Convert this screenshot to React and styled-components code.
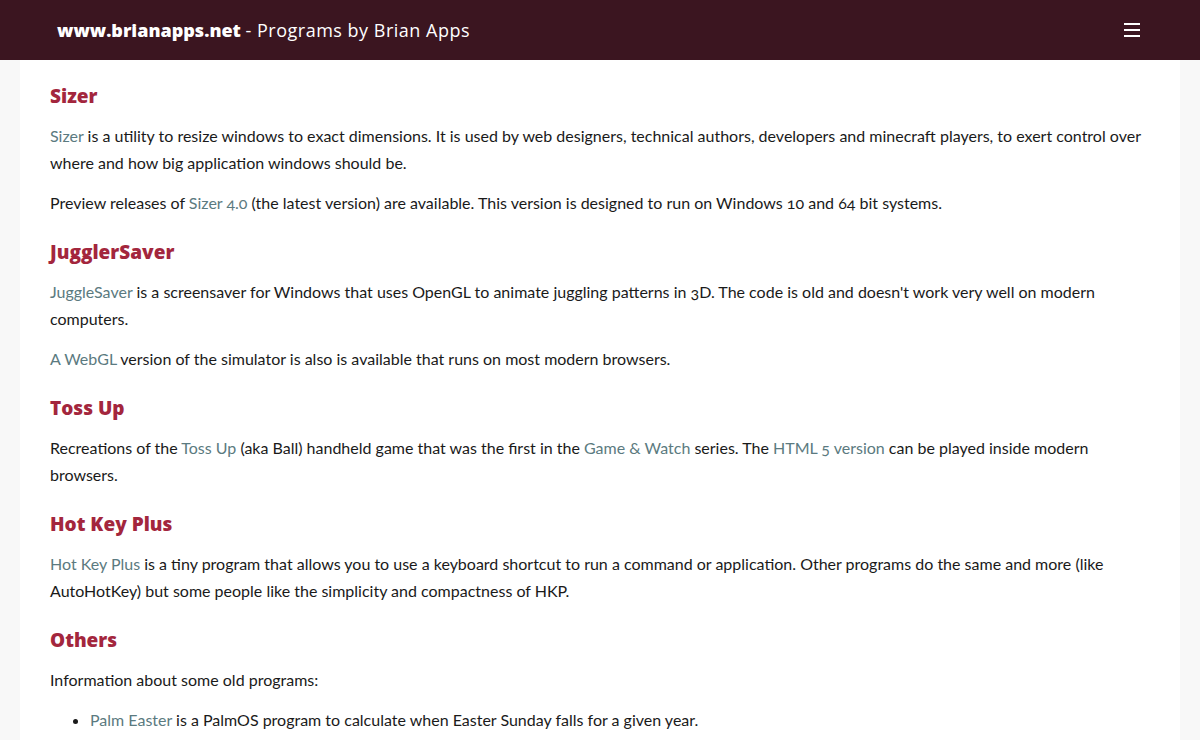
import React from 'react'
import styled, { createGlobalStyle } from 'styled-components'

const GlobalStyle = createGlobalStyle`
  html, body {
    margin: 0;
    padding: 0;
    background: #f8f8f8;
  }
  body {
    font-family: Lato, "Open Sans", sans-serif;
    color: #1a1a1a;
  }
`

const sections = [
  {
    title: 'Sizer',
    paras: [
      [['Sizer', true], [' is a utility to resize windows to exact dimensions. It is used by web designers, technical authors, developers and minecraft players, to exert control over where and how big application windows should be.']],
      [['Preview releases of '], ['Sizer 4.0', true], [' (the latest version) are available. This version is designed to run on Windows 10 and 64 bit systems.']],
    ],
  },
  {
    title: 'JugglerSaver',
    paras: [
      [['JuggleSaver', true], [" is a screensaver for Windows that uses OpenGL to animate juggling patterns in 3D. The code is old and doesn't work very well on modern computers."]],
      [['A WebGL', true], [' version of the simulator is also is available that runs on most modern browsers.']],
    ],
  },
  {
    title: 'Toss Up',
    paras: [
      [['Recreations of the '], ['Toss Up', true], [' (aka Ball) handheld game that was the first in the '], ['Game & Watch', true], [' series. The '], ['HTML 5 version', true], [' can be played inside modern browsers.']],
    ],
  },
  {
    title: 'Hot Key Plus',
    paras: [
      [['Hot Key Plus', true], [' is a tiny program that allows you to use a keyboard shortcut to run a command or application. Other programs do the same and more (like AutoHotKey) but some people like the simplicity and compactness of HKP.']],
    ],
  },
  {
    title: 'Others',
    paras: [[['Information about some old programs:']]],
    list: [
      [['Palm Easter', true], [' is a PalmOS program to calculate when Easter Sunday falls for a given year.']],
      [['Palm Juggler', true], [' is a juggling simulator for PalmOS.']],
    ],
  },
]

function Rich({ parts }) {
  return parts.map(([text, link], i) =>
    link ? <Link key={i} href="#">{text}</Link> : <React.Fragment key={i}>{text}</React.Fragment>
  )
}

export default function App() {
  return (
    <>
      <GlobalStyle />
      <Header>
        <Brand>
          <strong>www.brianapps.net</strong> <span>- Programs by Brian Apps</span>
        </Brand>
        <Burger aria-label="menu">
          <span />
          <span />
          <span />
        </Burger>
      </Header>
      <Main>
        {sections.map(s => (
          <Section key={s.title}>
            <Title>{s.title}</Title>
            {s.paras.map((p, i) => (
              <Para key={i}><Rich parts={p} /></Para>
            ))}
            {s.list && (
              <List>
                {s.list.map((p, i) => (
                  <li key={i}><Rich parts={p} /></li>
                ))}
              </List>
            )}
          </Section>
        ))}
      </Main>
    </>
  )
}

const Header = styled.header`
  height: 60px;
  background: #3b1520;
  display: flex;
  align-items: center;
  justify-content: space-between;
  padding: 0 60px 0 57px;
`

const Brand = styled.div`
  color: #fff;
  font-family: "Open Sans", sans-serif;
  font-size: 18px;
  strong {
    font-weight: 800;
  }
  span {
    letter-spacing: 0.5px;
  }
`

const Burger = styled.button`
  background: none;
  border: 0;
  padding: 0;
  width: 16px;
  height: 14px;
  display: flex;
  flex-direction: column;
  justify-content: space-between;
  cursor: pointer;
  span {
    display: block;
    height: 2px;
    background: #fff;
  }
`

const Main = styled.main`
  margin: 0 20px;
  background: #fff;
  padding: 22px 30px 40px;
  min-height: 700px;
`

const Section = styled.section`
  &:first-child h2 {
    margin-top: 0;
  }
`

const Title = styled.h2`
  margin: 22px 0 12px;
  font-family: "Open Sans", sans-serif;
  font-weight: 800;
  font-size: 19px;
  line-height: 28px;
  color: #a3263d;
`

const Para = styled.p`
  margin: 0 0 13px;
  font-size: 16px;
  line-height: 27px;
  font-variant-numeric: oldstyle-nums;
`

const Link = styled.a`
  color: #5b7a80;
  text-decoration: none;
`

const List = styled.ul`
  margin: 0;
  padding-left: 40px;
  font-size: 16px;
  line-height: 27px;
  li {
    margin-bottom: 13px;
  }
`
